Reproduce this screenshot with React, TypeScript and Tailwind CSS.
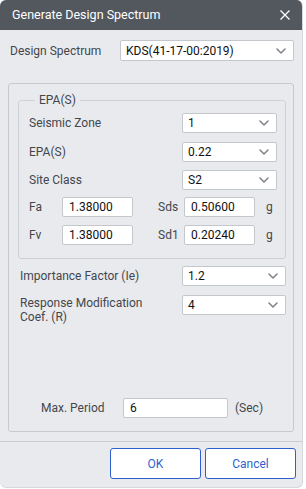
import React from "react";

const font = { fontFamily: "Roboto, 'Noto Sans', sans-serif" };

function Chevron() {
  return (
    <svg width="10" height="6" viewBox="0 0 10 6" className="shrink-0">
      <path d="M1 1 L5 5 L9 1" fill="none" stroke="#80858c" strokeWidth="1.6" strokeLinecap="round" strokeLinejoin="round" />
    </svg>
  );
}

function Select({ value, w, h = "h-[20px]" }: { value: string; w: string; h?: string }) {
  return (
    <div className={`${w} ${h} bg-white border border-[#c4c8cd] rounded-[2px] flex items-center justify-between pl-[5px] pr-[7px] text-[12px] text-[#111] shrink-0`}>
      <span>{value}</span>
      <Chevron />
    </div>
  );
}

function Input({ value, w }: { value: string; w: string }) {
  return (
    <div className={`${w} h-[20px] bg-white border border-[#c4c8cd] rounded-[2px] flex items-center pl-[6px] text-[12px] text-[#111] shrink-0`}>
      {value}
    </div>
  );
}

export default function App() {
  return (
    <div className="w-[306px] h-[489px] bg-white" style={font}>
      <div className="w-[303px] h-[488px] rounded-[6px] bg-[#e9eaed] overflow-hidden flex flex-col border-b border-r border-[#d6d8db]">
        <div className="h-[30px] bg-[#53585f] flex items-center justify-between pl-[12px] pr-[12px] text-white text-[12.5px] shrink-0">
          <span>Generate Design Spectrum</span>
          <svg width="10" height="10" viewBox="0 0 10 10">
            <path d="M0.5 0.5 L9.5 9.5 M9.5 0.5 L0.5 9.5" stroke="#fff" strokeWidth="1.3" />
          </svg>
        </div>
        <div className="px-[8px] flex flex-col text-[12px] text-[#43474d]">
          <div className="mt-[10px] flex items-center">
            <span className="w-[115px] pl-[2px]">Design Spectrum</span>
            <Select value="KDS(41-17-00:2019)" w="w-[174px]" h="h-[21px]" />
          </div>
          <div className="mt-[22px] h-[349px] border border-[#c6cacf] rounded-[3px] flex flex-col">
            <fieldset className="mt-[8px] ml-[9px] mr-[7px] border border-[#cdd1d5] rounded-[3px] pl-[10px] pr-[8px] pb-[13px]">
              <legend className="ml-[6px] px-[4px] leading-[16px]">EPA(S)</legend>
              <div className="mt-[5px] flex items-center justify-between">
                <span>Seismic Zone</span>
                <Select value="1" w="w-[95px]" />
              </div>
              <div className="mt-[9px] flex items-center justify-between">
                <span>EPA(S)</span>
                <Select value="0.22" w="w-[95px]" />
              </div>
              <div className="mt-[8px] flex items-center justify-between">
                <span>Site Class</span>
                <Select value="S2" w="w-[95px]" />
              </div>
              <div className="mt-[7px] flex items-center">
                <span className="w-[33px]">Fa</span>
                <Input value="1.38000" w="w-[71px]" />
                <span className="ml-[25px] w-[26px]">Sds</span>
                <Input value="0.50600" w="w-[71px]" />
                <span className="ml-[11px]">g</span>
              </div>
              <div className="mt-[8px] flex items-center">
                <span className="w-[33px]">Fv</span>
                <Input value="1.38000" w="w-[71px]" />
                <span className="ml-[25px] w-[26px]">Sd1</span>
                <Input value="0.20240" w="w-[71px]" />
                <span className="ml-[11px]">g</span>
              </div>
            </fieldset>
            <div className="mt-[7px] pl-[11px] pr-[7px] flex items-center justify-between">
              <span>Importance Factor (Ie)</span>
              <Select value="1.2" w="w-[104px]" />
            </div>
            <div className="mt-[9px] pl-[11px] pr-[7px] flex items-start justify-between">
              <span className="leading-[14px] pt-[1px]">Response Modification<br />Coef. (R)</span>
              <Select value="4" w="w-[104px]" />
            </div>
            <div className="mt-auto mb-[13px] pl-[32px] flex items-center">
              <span className="w-[82px]">Max. Period</span>
              <Input value="6" w="w-[105px]" />
              <span className="ml-[7px]">(Sec)</span>
            </div>
          </div>
        </div>
        <div className="mt-[9px] h-px bg-[#c9cdd2]" />
        <div className="mt-[6px] flex justify-end gap-[4px] pr-[6px]">
          <button className="w-[91px] h-[31px] bg-white border border-[#2f5fcf] rounded-[3px] text-[#2f5fcf] text-[12px]">OK</button>
          <button className="w-[91px] h-[31px] bg-white border border-[#2f5fcf] rounded-[3px] text-[#2f5fcf] text-[12px]">Cancel</button>
        </div>
      </div>
    </div>
  );
}
